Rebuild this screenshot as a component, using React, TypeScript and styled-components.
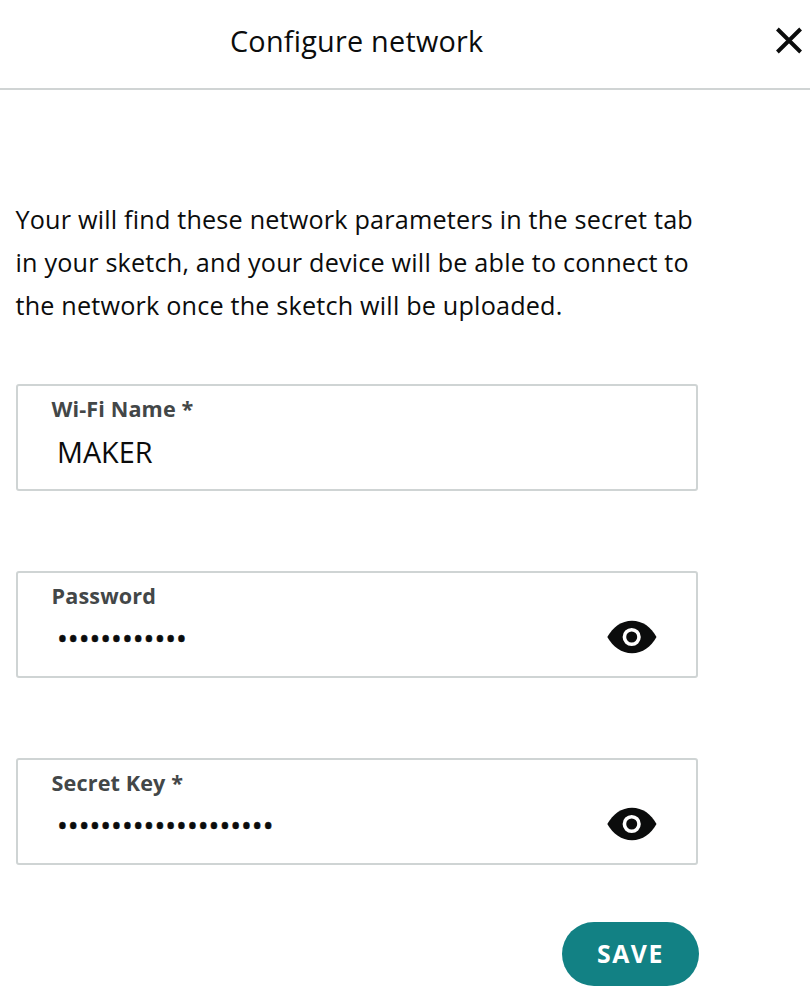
import React from 'react';
import styled, { createGlobalStyle } from 'styled-components';

const GlobalStyle = createGlobalStyle`
  * { box-sizing: border-box; }
  body { margin: 0; background: #fff; font-family: "Open Sans", sans-serif; color: #0b0c0c; }
`;

const Dialog = styled.main`
  width: 810px;
  height: 992px;
  overflow: hidden;
  background: #fff;
`;

const Header = styled.header`
  display: flex;
  justify-content: space-between;
  height: 90px;
  padding: 21px 7px 0 230px;
  border-bottom: 2px solid #d0d4d4;
`;

const Title = styled.h1`
  margin: 0;
  font-size: 28.8px;
  line-height: 40px;
  font-weight: 400;
  letter-spacing: 0.23px;
  white-space: nowrap;
`;

const IconButton = styled.button`
  display: block;
  flex: none;
  padding: 0;
  border: 0;
  background: none;
  svg { display: block; }
`;

const CloseButton = styled(IconButton)`
  width: 28px;
  height: 28px;
  margin-top: 6px;
`;

const Intro = styled.p`
  margin: 108px 0 0 15.5px;
  font-size: 25.2px;
  line-height: 43.2px;
  letter-spacing: 0.19px;
  white-space: nowrap;
`;

const Form = styled.form`
  display: flex;
  flex-direction: column;
  gap: 80px;
  width: 682px;
  margin: 56px 0 0 15.6px;
`;

const Field = styled.div`
  display: flex;
  justify-content: space-between;
  height: 107px;
  padding: 7px 39px 0 34px;
  border: 2px solid #cfd4d4;
  border-radius: 3px;
`;

const FieldText = styled.div`
  display: flex;
  flex-direction: column;
`;

const Label = styled.label`
  font-size: 21.6px;
  line-height: 32px;
  font-weight: 700;
  letter-spacing: 0.12px;
  color: #434748;
  white-space: nowrap;
`;

const Value = styled.span<{ $masked: boolean }>`
  margin-left: 5.4px;
  margin-top: ${({ $masked }) => ($masked ? '6px' : '7px')};
  font-size: 28.8px;
  line-height: 40px;
  white-space: nowrap;
  -webkit-text-stroke: ${({ $masked }) => ($masked ? '0.5px #0b0c0c' : '0')};
`;

const EyeButton = styled(IconButton)`
  width: 50px;
  height: 34px;
  margin-top: 40px;
`;

const Actions = styled.footer`
  display: flex;
  justify-content: flex-end;
  width: 699px;
  margin-top: 57.2px;
`;

const SaveButton = styled.button`
  width: 137px;
  height: 64px;
  padding: 0 0 1px 0;
  border: 0;
  border-radius: 32px;
  background: #128184;
  color: #fff;
  font: 700 24.8px/62px "Open Sans", sans-serif;
  letter-spacing: 1.6px;
`;

const fields = [
  { label: 'Wi-Fi Name *', value: 'MAKER', masked: false },
  { label: 'Password', value: '•'.repeat(12), masked: true },
  { label: 'Secret Key *', value: '•'.repeat(20), masked: true },
];

const CloseIcon = () => (
  <svg width="28" height="28" viewBox="0 0 28 28" fill="none" stroke="#0b0c0c" strokeWidth="3.9">
    <path d="M2.4 2 25.6 25M25.6 2 2.4 25" />
  </svg>
);

const EyeIcon = () => (
  <svg width="50" height="34" viewBox="0 0 50 34">
    <path d="M.3 17C6 7 14.500.8 25 .8S44 7 49.500 17C44 27 35.500 33.200 25 33.200S6 27 .3 17Z" fill="#0b0c0c" />
    <circle cx="24.7" cy="17" r="7.300" fill="#0b0c0c" stroke="#fff" strokeWidth="3.600" />
  </svg>
);

export default function App() {
  return (
    <Dialog>
      <GlobalStyle />
      <Header>
        <Title>Configure network</Title>
        <CloseButton type="button" aria-label="Close"><CloseIcon /></CloseButton>
      </Header>
      <Intro>
        Your will find these network parameters in the secret tab<br />
        in your sketch, and your device will be able to connect to<br />
        the network once the sketch will be uploaded.
      </Intro>
      <Form>
        {fields.map((f) => (
          <Field key={f.label}>
            <FieldText>
              <Label>{f.label}</Label>
              <Value $masked={f.masked}>{f.value}</Value>
            </FieldText>
            {f.masked && <EyeButton type="button" aria-label="Show"><EyeIcon /></EyeButton>}
          </Field>
        ))}
      </Form>
      <Actions>
        <SaveButton type="button">SAVE</SaveButton>
      </Actions>
    </Dialog>
  );
}
